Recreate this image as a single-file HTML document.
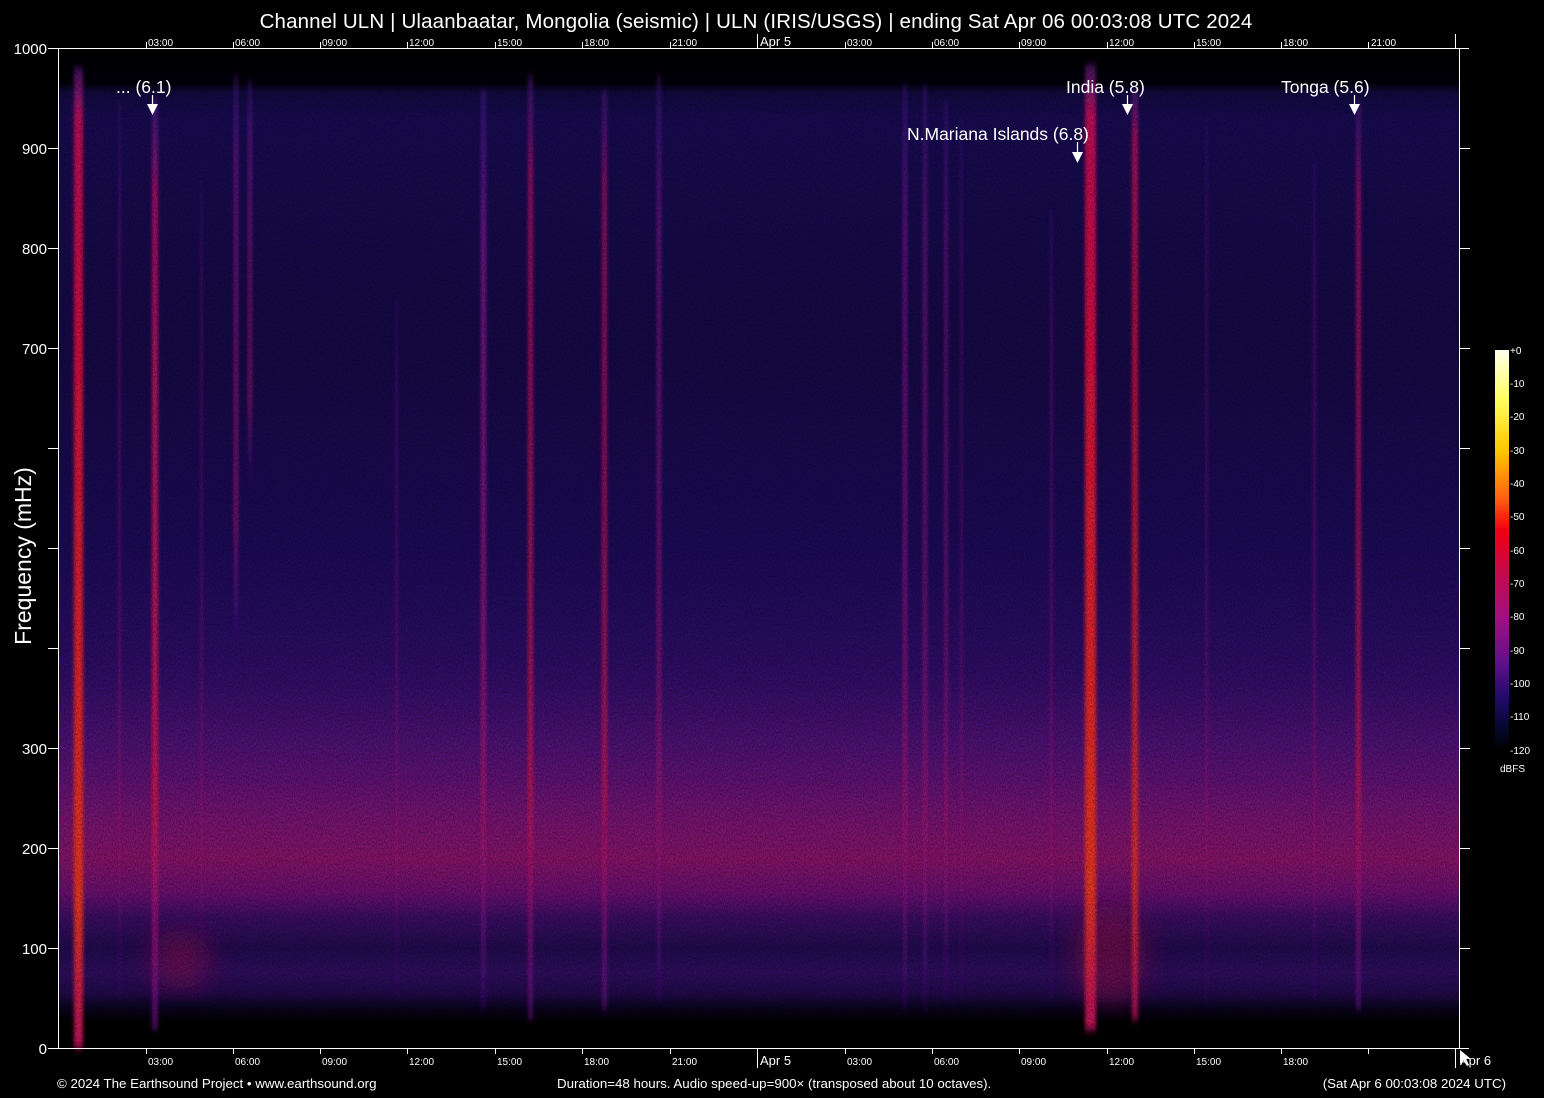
<!DOCTYPE html>
<html><head><meta charset="utf-8"><style>
html,body{margin:0;padding:0;background:#000;}
svg{display:block;}
text{font-family:"Liberation Sans",Arial,sans-serif;fill:#fff;}
</style></head><body>
<svg width="1544" height="1098" viewBox="0 0 1544 1098" xmlns="http://www.w3.org/2000/svg">
<defs>
<linearGradient id="bg" x1="0" y1="0" x2="0" y2="1">
<stop offset="0" stop-color="#000"/>
<stop offset="0.035" stop-color="#02010a"/>
<stop offset="0.045" stop-color="#120a40"/>
<stop offset="0.07" stop-color="#180b52"/>
<stop offset="0.3" stop-color="#160946"/>
<stop offset="0.5" stop-color="#1c0b58"/>
<stop offset="0.62" stop-color="#2e0d68"/>
<stop offset="0.7" stop-color="#501276"/>
<stop offset="0.77" stop-color="#761472"/>
<stop offset="0.81" stop-color="#861468"/>
<stop offset="0.845" stop-color="#6a1070"/>
<stop offset="0.87" stop-color="#3a0e62"/>
<stop offset="0.9" stop-color="#220b50"/>
<stop offset="0.925" stop-color="#2e0e5e"/>
<stop offset="0.945" stop-color="#220a4c"/>
<stop offset="0.96" stop-color="#0a0420"/>
<stop offset="0.975" stop-color="#000"/>
<stop offset="1" stop-color="#000"/>
</linearGradient>
<linearGradient id="cb" x1="0" y1="0" x2="0" y2="1">
<stop offset="0" stop-color="#fffff0"/>
<stop offset="0.12" stop-color="#ffff60"/>
<stop offset="0.25" stop-color="#ffc800"/>
<stop offset="0.37" stop-color="#ff6010"/>
<stop offset="0.45" stop-color="#f00010"/>
<stop offset="0.55" stop-color="#c80848"/>
<stop offset="0.67" stop-color="#a01080"/>
<stop offset="0.78" stop-color="#60108a"/>
<stop offset="0.87" stop-color="#200a6a"/>
<stop offset="0.94" stop-color="#080830"/>
<stop offset="1" stop-color="#000"/>
</linearGradient>
<linearGradient id="sRed" x1="0" y1="0" x2="0" y2="1">
<stop offset="0" stop-color="#7020a0" stop-opacity="0.6"/>
<stop offset="0.05" stop-color="#c01058"/>
<stop offset="0.3" stop-color="#d81040"/>
<stop offset="0.65" stop-color="#e82828"/>
<stop offset="0.85" stop-color="#ec3820"/>
<stop offset="1" stop-color="#c01060"/>
</linearGradient>
<linearGradient id="sMag" x1="0" y1="0" x2="0" y2="1">
<stop offset="0" stop-color="#6020a0" stop-opacity="0.5"/>
<stop offset="0.1" stop-color="#a81068"/>
<stop offset="0.75" stop-color="#c81850"/>
<stop offset="1" stop-color="#8010a0" stop-opacity="0.6"/>
</linearGradient>
<linearGradient id="sPur" x1="0" y1="0" x2="0" y2="1">
<stop offset="0" stop-color="#5020a0" stop-opacity="0.5"/>
<stop offset="0.15" stop-color="#7a1890"/>
<stop offset="0.8" stop-color="#a01870"/>
<stop offset="1" stop-color="#6010a0" stop-opacity="0.3"/>
</linearGradient>
<filter id="bl" x="-50%" y="-5%" width="200%" height="110%"><feGaussianBlur stdDeviation="1.8 4"/></filter>
<filter id="bl2" x="-50%" y="-20%" width="200%" height="140%"><feGaussianBlur stdDeviation="14 12"/></filter>
<filter id="noise" x="0" y="0" width="100%" height="100%">
<feTurbulence type="fractalNoise" baseFrequency="0.9 0.5" numOctaves="1" seed="3"/>
<feColorMatrix values="0 0 0 0 0  0 0 0 0 0  0 0 0 0 0  0 0 0 -1.6 1.1"/>
</filter>
</defs>

<text x="756" y="28" font-size="20.5" text-anchor="middle" letter-spacing="0.15">Channel ULN | Ulaanbaatar, Mongolia (seismic) | ULN (IRIS/USGS) | ending Sat Apr 06 00:03:08 UTC 2024</text>

<rect x="58" y="48" width="1401" height="1000" fill="url(#bg)"/>
<ellipse cx="180" cy="960" rx="30" ry="30" fill="#901050" filter="url(#bl2)" opacity="0.55"/>
<ellipse cx="1110" cy="955" rx="35" ry="50" fill="#a01040" filter="url(#bl2)" opacity="0.5"/>

<g filter="url(#bl)">
<rect x="74" y="68" width="9" height="980" fill="url(#sRed)"/>
<rect x="152" y="100" width="6" height="930" fill="url(#sMag)"/>
<rect x="118" y="100" width="3" height="900" fill="url(#sPur)" opacity="0.5"/>
<rect x="200" y="180" width="3" height="820" fill="url(#sPur)" opacity="0.4"/>
<rect x="234" y="75" width="4" height="560" fill="url(#sPur)" opacity="0.8"/>
<rect x="248" y="80" width="4" height="400" fill="url(#sPur)" opacity="0.7"/>
<rect x="395" y="300" width="3" height="700" fill="url(#sPur)" opacity="0.4"/>
<rect x="481" y="90" width="5" height="920" fill="url(#sPur)" opacity="0.9"/>
<rect x="528" y="75" width="5" height="945" fill="url(#sMag)" opacity="0.85"/>
<rect x="602" y="90" width="5" height="920" fill="url(#sMag)" opacity="0.8"/>
<rect x="657" y="75" width="4" height="925" fill="url(#sPur)" opacity="0.8"/>
<rect x="903" y="85" width="4" height="925" fill="url(#sPur)" opacity="0.8"/>
<rect x="923" y="85" width="4" height="925" fill="url(#sPur)" opacity="0.7"/>
<rect x="944" y="100" width="4" height="900" fill="url(#sPur)" opacity="0.6"/>
<rect x="960" y="120" width="3" height="880" fill="url(#sPur)" opacity="0.4"/>
<rect x="1050" y="210" width="3" height="790" fill="url(#sPur)" opacity="0.5"/>
<rect x="1085" y="65" width="11" height="965" fill="url(#sRed)"/>
<rect x="1132" y="90" width="6" height="930" fill="url(#sRed)" opacity="0.85"/>
<rect x="1205" y="120" width="3" height="890" fill="url(#sPur)" opacity="0.4"/>
<rect x="1313" y="160" width="3" height="840" fill="url(#sPur)" opacity="0.5"/>
<rect x="1356" y="100" width="5" height="910" fill="url(#sMag)" opacity="0.8"/>
</g>
<rect x="58" y="48" width="1401" height="1000" filter="url(#noise)" opacity="0.45"/>

<g stroke="#fff" stroke-width="1" fill="none">
<line x1="58.5" y1="48" x2="58.5" y2="1048"/>
<line x1="1459.5" y1="48" x2="1459.5" y2="1048"/>
<line x1="48" y1="1048.5" x2="1469" y2="1048.5"/>
<line x1="48" y1="48.5" x2="1469" y2="48.5"/>
<path d="M48 148.5h10M48 248.5h10M48 348.5h10M48 448.5h10M48 548.5h10M48 648.5h10M48 748.5h10M48 848.5h10M48 948.5h10"/>
<path d="M1460 148.5h10M1460 248.5h10M1460 348.5h10M1460 448.5h10M1460 548.5h10M1460 648.5h10M1460 748.5h10M1460 848.5h10M1460 948.5h10"/>
<path d="M146.5 1048v6M233.5 1048v6M320.5 1048v6M407.5 1048v6M495.5 1048v6M582.5 1048v6M670.5 1048v6M757.5 1048v20M845.5 1048v6M932.5 1048v6M1019.5 1048v6M1107.5 1048v6M1194.5 1048v6M1281.5 1048v6M1368.5 1048v6M1455.5 1048v20"/>
<path d="M146.5 48v-6M233.5 48v-6M320.5 48v-6M407.5 48v-6M495.5 48v-6M582.5 48v-6M670.5 48v-6M757.5 48v-14M845.5 48v-6M932.5 48v-6M1019.5 48v-6M1107.5 48v-6M1194.5 48v-6M1281.5 48v-6M1368.5 48v-6M1455.5 48v-14"/>
</g>

<g font-size="15" text-anchor="end">
<text x="47" y="54">1000</text><text x="47" y="154">900</text><text x="47" y="254">800</text><text x="47" y="354">700</text>
<text x="47" y="754">300</text><text x="47" y="854">200</text><text x="47" y="954">100</text><text x="47" y="1054">0</text>
</g>
<text transform="translate(31,556) rotate(-90)" font-size="23" text-anchor="middle">Frequency (mHz)</text>

<g font-size="10">
<text x="148" y="1065">03:00</text><text x="235" y="1065">06:00</text><text x="322" y="1065">09:00</text><text x="409" y="1065">12:00</text><text x="497" y="1065">15:00</text><text x="584" y="1065">18:00</text><text x="672" y="1065">21:00</text>
<text x="847" y="1065">03:00</text><text x="934" y="1065">06:00</text><text x="1021" y="1065">09:00</text><text x="1109" y="1065">12:00</text><text x="1196" y="1065">15:00</text><text x="1283" y="1065">18:00</text>
<text x="148" y="46">03:00</text><text x="235" y="46">06:00</text><text x="322" y="46">09:00</text><text x="409" y="46">12:00</text><text x="497" y="46">15:00</text><text x="584" y="46">18:00</text><text x="672" y="46">21:00</text>
<text x="847" y="46">03:00</text><text x="934" y="46">06:00</text><text x="1021" y="46">09:00</text><text x="1109" y="46">12:00</text><text x="1196" y="46">15:00</text><text x="1283" y="46">18:00</text><text x="1371" y="46">21:00</text>
</g>
<text x="760" y="1065" font-size="13">Apr  5</text>
<text x="1460" y="1065" font-size="13">Apr  6</text>
<text x="760" y="46" font-size="13">Apr  5</text>
<path d="M1460 1050l0 14 3-4 4 6 2-1-3-6 5 0z" fill="#fff"/>

<g font-size="17.5">
<text x="116" y="93">... (6.1)</text>
<text x="1066" y="93">India (5.8)</text>
<text x="1281" y="93">Tonga (5.6)</text>
<text x="907" y="140">N.Mariana Islands (6.8)</text>
</g>
<g stroke="#fff" stroke-width="1.2"><path d="M152.5 95v10M1127.5 95v10M1354.5 95v10M1077.5 142v12"/></g>
<g fill="#fff"><path d="M147 104h11l-5.5 11z"/><path d="M1122 104h11l-5.5 11z"/><path d="M1349 104h11l-5.5 11z"/><path d="M1072 152h11l-5.5 11z"/></g>

<rect x="1495" y="350" width="14" height="400" fill="url(#cb)"/>
<g font-size="10" fill="#ddd">
<text x="1510" y="354">+0</text><text x="1510" y="387">-10</text><text x="1510" y="420">-20</text><text x="1510" y="454">-30</text><text x="1510" y="487">-40</text><text x="1510" y="520">-50</text><text x="1510" y="554">-60</text><text x="1510" y="587">-70</text><text x="1510" y="620">-80</text><text x="1510" y="654">-90</text><text x="1510" y="687">-100</text><text x="1510" y="720">-110</text><text x="1510" y="754">-120</text>
<text x="1500" y="772">dBFS</text>
</g>

<g font-size="13.3">
<text x="57" y="1088">© 2024 The Earthsound Project • www.earthsound.org</text>
<text x="557" y="1088">Duration=48 hours. Audio speed-up=900× (transposed about 10 octaves).</text>
<text x="1506" y="1088" text-anchor="end">(Sat Apr  6 00:03:08 2024 UTC)</text>
</g>
</svg>
</body></html>
